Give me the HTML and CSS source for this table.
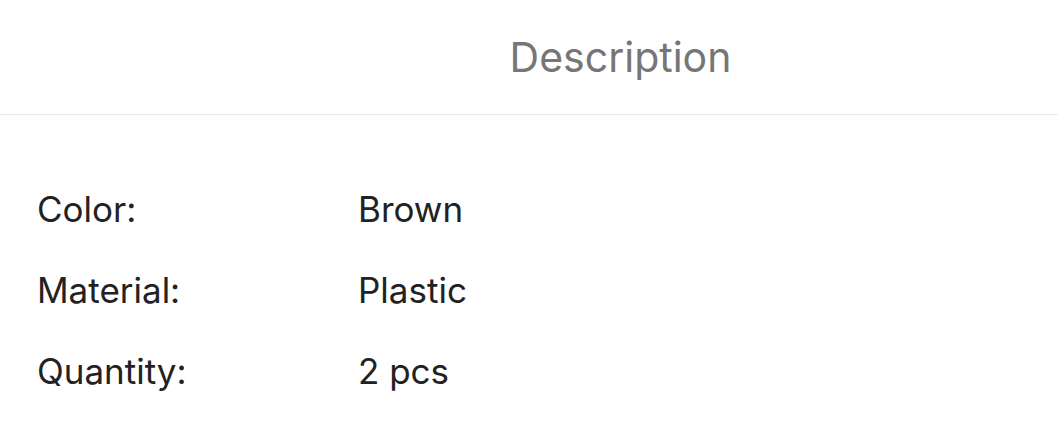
FILE: index.html
```html
<!DOCTYPE html>
<html>
<head>
<meta charset="utf-8">
<link rel="stylesheet" href="styles.css">
</head>
<body>
<div class="header"><span class="title">Description</span></div>
<div class="specs">
  <div class="row"><span class="label">Color:</span><span class="value">Brown</span></div>
  <div class="row"><span class="label">Material:</span><span class="value">Plastic</span></div>
  <div class="row"><span class="label">Quantity:</span><span class="value">2 pcs</span></div>
</div>
</body>
</html>
```
FILE: styles.css
```css
html, body {
  margin: 0;
  padding: 0;
  background: #ffffff;
  font-family: Inter, "Noto Sans", sans-serif;
}
.header {
  height: 115px;
  border-bottom: 1px solid #e9e9e9;
  display: flex;
  align-items: center;
  justify-content: center;
  padding-left: 183px;
  box-sizing: border-box;
}
.title {
  font-size: 41px;
  color: #767676;
  font-weight: 400;
}
.specs {
  padding: 53px 0 0 37px;
  display: flex;
  flex-direction: column;
}
.row {
  display: flex;
  height: 81px;
  align-items: center;
  font-size: 35px;
  color: #222222;
}
.label {
  width: 321px;
}
```
